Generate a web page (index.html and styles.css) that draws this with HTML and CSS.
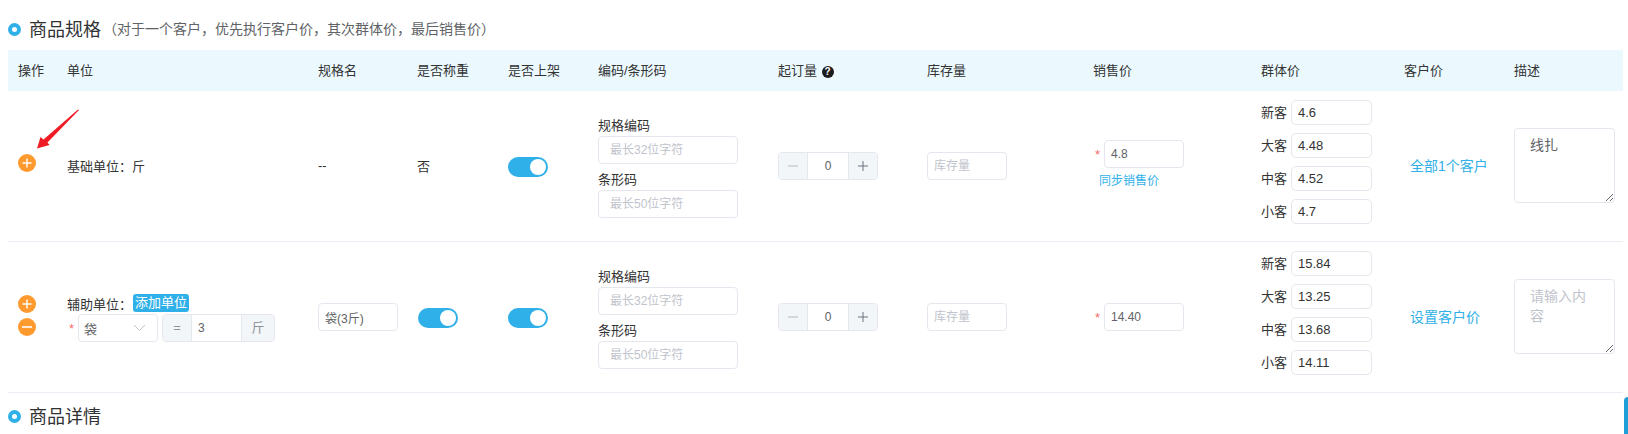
FILE: index.html
```html
<!DOCTYPE html>
<html lang="zh-CN">
<head>
    <meta charset="UTF-8">
    <meta name="viewport" content="width=device-width, initial-scale=1.0">
    <title>商品规格</title>
    <link rel="stylesheet" href="styles.css">
</head>
<body>
    <div class="page">
        <div class="section-title">
            <span class="dot"></span>
            <h2>商品规格</h2>
            <span class="note">（对于一个客户，优先执行客户价，其次群体价，最后销售价）</span>
        </div>

        <!-- Table head -->
        <div class="grid-row head">
            <div class="cell">操作</div>
            <div class="cell">单位</div>
            <div class="cell">规格名</div>
            <div class="cell">是否称重</div>
            <div class="cell">是否上架</div>
            <div class="cell">编码/条形码</div>
            <div class="cell">起订量 <span class="help">?</span></div>
            <div class="cell">库存量</div>
            <div class="cell">销售价</div>
            <div class="cell">群体价</div>
            <div class="cell">客户价</div>
            <div class="cell">描述</div>
        </div>

        <!-- Base unit -->
        <div class="grid-row item">
            <div class="cell">
                <div class="ops ops-base">
                    <svg class="op" viewBox="0 0 18 18"><circle cx="9" cy="9" r="9" fill="#ff9a2e"/><path d="M4.5 9h9M9 4.5v9" stroke="#fff" stroke-width="1.4"/></svg>
                </div>
            </div>
            <div class="cell text-cell">基础单位：斤</div>
            <div class="cell text-cell">--</div>
            <div class="cell text-cell">否</div>
            <div class="cell"><span class="switch"></span></div>
            <div class="cell">
                <div class="codes">
                    <label>规格编码</label>
                    <input class="field code-field" type="text" placeholder="最长32位字符">
                    <label>条形码</label>
                    <input class="field code-field" type="text" placeholder="最长50位字符">
                </div>
            </div>
            <div class="cell">
                <div class="stepper">
                    <span class="step"><svg width="10" height="10" viewBox="0 0 10 10"><path d="M0 5h10" stroke="#b4b9c1"/></svg></span>
                    <span class="step-value">0</span>
                    <span class="step step-right"><svg width="10" height="10" viewBox="0 0 10 10"><path d="M0 5h10M5 0v10" stroke="#6b7280"/></svg></span>
                </div>
            </div>
            <div class="cell"><input class="field small-field" type="text" placeholder="库存量"></div>
            <div class="cell">
                <div class="price-base">
                    <div class="price-line"><span class="star">*</span><input class="field small-field" type="text" value="4.8"></div>
                    <a class="link sync">同步销售价</a>
                </div>
            </div>
            <div class="cell">
                <div class="group-price"><span>新客</span><input class="field group-field" type="text" value="4.6"></div>
                <div class="group-price"><span>大客</span><input class="field group-field" type="text" value="4.48"></div>
                <div class="group-price"><span>中客</span><input class="field group-field" type="text" value="4.52"></div>
                <div class="group-price"><span>小客</span><input class="field group-field" type="text" value="4.7"></div>
            </div>
            <div class="cell"><a class="link customer">全部1个客户</a></div>
            <div class="cell"><textarea class="desc">线扎</textarea></div>
        </div>

        <!-- Extra unit -->
        <div class="grid-row item">
            <div class="cell">
                <div class="ops ops-extra">
                    <svg class="op" viewBox="0 0 18 18"><circle cx="9" cy="9" r="9" fill="#ff9a2e"/><path d="M4.5 9h9M9 4.5v9" stroke="#fff" stroke-width="1.4"/></svg>
                    <svg class="op" viewBox="0 0 18 18"><circle cx="9" cy="9" r="9" fill="#ff9a2e"/><path d="M4 9h10" stroke="#fff" stroke-width="1.6"/></svg>
                </div>
            </div>
            <div class="cell">
                <div class="unit">
                    <div class="unit-title">辅助单位：<span class="badge">添加单位</span></div>
                    <div class="unit-form">
                        <span class="star">*</span>
                        <div class="select">袋
                            <svg width="13" height="8" viewBox="0 0 13 8"><path d="M1 1l5.5 5.5L12 1" fill="none" stroke="#c0c4cc"/></svg>
                        </div>
                        <div class="input-group">
                            <span class="addon addon-eq">=</span>
                            <span class="group-value">3</span>
                            <span class="addon addon-unit">斤</span>
                        </div>
                    </div>
                </div>
            </div>
            <div class="cell"><input class="field small-field" type="text" value="袋(3斤)"></div>
            <div class="cell"><span class="switch switch-weigh"></span></div>
            <div class="cell"><span class="switch"></span></div>
            <div class="cell">
                <div class="codes">
                    <label>规格编码</label>
                    <input class="field code-field" type="text" placeholder="最长32位字符">
                    <label>条形码</label>
                    <input class="field code-field" type="text" placeholder="最长50位字符">
                </div>
            </div>
            <div class="cell">
                <div class="stepper">
                    <span class="step"><svg width="10" height="10" viewBox="0 0 10 10"><path d="M0 5h10" stroke="#b4b9c1"/></svg></span>
                    <span class="step-value">0</span>
                    <span class="step step-right"><svg width="10" height="10" viewBox="0 0 10 10"><path d="M0 5h10M5 0v10" stroke="#6b7280"/></svg></span>
                </div>
            </div>
            <div class="cell"><input class="field small-field" type="text" placeholder="库存量"></div>
            <div class="cell">
                <div class="price-line"><span class="star">*</span><input class="field small-field" type="text" value="14.40"></div>
            </div>
            <div class="cell">
                <div class="group-price"><span>新客</span><input class="field group-field" type="text" value="15.84"></div>
                <div class="group-price"><span>大客</span><input class="field group-field" type="text" value="13.25"></div>
                <div class="group-price"><span>中客</span><input class="field group-field" type="text" value="13.68"></div>
                <div class="group-price"><span>小客</span><input class="field group-field" type="text" value="14.11"></div>
            </div>
            <div class="cell"><a class="link customer">设置客户价</a></div>
            <div class="cell"><textarea class="desc" placeholder="请输入内容"></textarea></div>
        </div>

        <div class="section-title section-title-detail">
            <span class="dot"></span>
            <h2>商品详情</h2>
        </div>
    </div>

    <!-- annotation from the screenshot -->
    <svg class="arrow" width="60" height="50" viewBox="0 0 60 50">
        <path d="M48 1L16.5 33.5L18.5 36L6 39.5L9.5 28L12.5 30.5L47 0.5Z" fill="#ee1c25"/>
    </svg>
    <div class="scroll-thumb"></div>
</body>
</html>
```

FILE: styles.css
```css
* {
    box-sizing: border-box;
}

html, body {
    height: 100%;
}

body {
    margin: 0;
    overflow: hidden;
    font-family: "Liberation Sans", "Noto Sans CJK SC", sans-serif;
    font-size: 13px;
    color: #333;
    background: #fff;
}

.page {
    margin: 0 5px 0 8px;
}

.section-title {
    display: flex;
    align-items: center;
    height: 50px;
    padding-top: 8px;
}

.section-title-detail {
    height: 46px;
    padding-top: 0;
}

.section-title h2 {
    margin: 0 0 3px;
    font-size: 18px;
    font-weight: normal;
    color: #303133;
}

.dot {
    width: 13px;
    height: 13px;
    margin-right: 8px;
    border: 4px solid #2fb0e8;
    border-radius: 50%;
}

.note {
    margin: 0 0 2px 2px;
    font-size: 14px;
    color: #606266;
}

.grid-row {
    display: grid;
    grid-template-columns: 49px 251px 99px 91px 90px 180px 149px 166px 168px 143px 110px 119px;
    align-items: center;
}

.head {
    height: 41px;
    padding-bottom: 2px;
    background: #ebf9ff;
}

.item {
    height: 151px;
    border-bottom: 1px solid #ebeef5;
}

.cell {
    padding-left: 10px;
}

.text-cell {
    padding-bottom: 2px;
}

.help {
    display: inline-block;
    width: 12px;
    height: 12px;
    margin-left: 1px;
    border-radius: 50%;
    background: #1c1c1c;
    color: #fff;
    font-size: 10px;
    font-weight: bold;
    line-height: 12px;
    text-align: center;
    vertical-align: 0;
}

.ops {
    display: flex;
    flex-direction: column;
    gap: 5px;
    width: 18px;
}

.ops-base {
    margin-bottom: 6px;
}

.ops-extra {
    margin-bottom: 4px;
}

.op {
    display: block;
    width: 18px;
    height: 18px;
}

.switch {
    position: relative;
    display: block;
    width: 40px;
    height: 20px;
    margin-top: 2px;
    border-radius: 10px;
    background: #2fb0e8;
}

.switch-weigh {
    margin-left: 1px;
}

.switch::after {
    content: "";
    position: absolute;
    top: 2px;
    right: 2px;
    width: 16px;
    height: 16px;
    border-radius: 50%;
    background: #fff;
}

.field {
    display: block;
    height: 28px;
    padding: 0 6px;
    border: 1px solid #e4e7ed;
    border-radius: 4px;
    outline: none;
    background: #fff;
    font-family: inherit;
    font-size: 12px;
    color: #606266;
}

.field::placeholder,
.desc::placeholder {
    color: #c0c4cc;
    opacity: 1;
}

.small-field {
    width: 80px;
}

.codes {
    padding-bottom: 4px;
}

.codes label {
    display: block;
    padding-top: 6px;
    line-height: 20px;
    color: #333;
}

.code-field {
    width: 140px;
    padding: 0 11px;
}

.stepper {
    display: flex;
    width: 100px;
    height: 28px;
    border: 1px solid #e4e7ed;
    border-radius: 4px;
    overflow: hidden;
}

.step {
    display: flex;
    align-items: center;
    justify-content: center;
    width: 29px;
    background: #f3f6f9;
    border-right: 1px solid #e4e7ed;
}

.step-right {
    border-right: 0;
    border-left: 1px solid #e4e7ed;
}

.step-value {
    flex: 1;
    font-size: 12px;
    line-height: 26px;
    text-align: center;
    color: #606266;
}

.price-base {
    margin-bottom: 1px;
}

.price-line {
    display: flex;
    align-items: center;
}

.star {
    width: 11px;
    padding-left: 2px;
    color: #f56c6c;
    font-size: 13px;
}

.link {
    color: #2fb0e8;
    cursor: pointer;
}

.sync {
    display: block;
    margin: 3px 0 0 6px;
    font-size: 12px;
    line-height: 20px;
}

.customer {
    display: block;
    margin: 0 0 2px 6px;
    font-size: 14px;
}

.group-price {
    display: flex;
    align-items: center;
    height: 25px;
    margin-bottom: 8px;
}

.group-price span {
    width: 30px;
    padding-bottom: 2px;
}

.group-field {
    width: 81px;
    height: 25px;
    font-size: 13px;
    color: #333;
    border-radius: 5px;
}

.desc {
    display: block;
    width: 101px;
    height: 75px;
    margin: 0 0 2px;
    padding: 6px 15px;
    border: 1px solid #e4e7ed;
    border-radius: 4px;
    outline: none;
    font-family: inherit;
    font-size: 14px;
    line-height: 20px;
    color: #606266;
}

.unit {
    padding-top: 2px;
}

.unit-title {
    display: flex;
    align-items: center;
    height: 18px;
    margin-bottom: 2px;
}

.badge {
    height: 18px;
    margin-left: 1px;
    padding: 0 2px;
    border-radius: 3px;
    background: #2fb0e8;
    color: #fff;
    line-height: 18px;
}

.unit-form {
    display: flex;
    align-items: center;
}

.select {
    display: flex;
    align-items: center;
    justify-content: space-between;
    width: 80px;
    height: 28px;
    margin-right: 4px;
    padding: 0 11px 0 5px;
    border: 1px solid #e4e7ed;
    border-radius: 4px;
    color: #606266;
}

.input-group {
    display: flex;
    width: 113px;
    height: 28px;
    border: 1px solid #e4e7ed;
    border-radius: 4px;
    overflow: hidden;
    color: #606266;
}

.addon {
    flex: none;
    background: #f3f6f9;
    line-height: 26px;
    text-align: center;
    color: #909399;
}

.addon-eq {
    width: 29px;
    border-right: 1px solid #e4e7ed;
}

.addon-unit {
    width: 33px;
    border-left: 1px solid #e4e7ed;
}

.group-value {
    flex: 1;
    padding-left: 6px;
    font-size: 12px;
    line-height: 26px;
}

/* these two lie over the page */
.arrow {
    position: absolute;
    left: 31px;
    top: 109px;
}

.scroll-thumb {
    position: absolute;
    right: 0;
    top: 397px;
    width: 4px;
    height: 37px;
    border-radius: 4px 0 0 0;
    background: #1f9fd8;
}
```
